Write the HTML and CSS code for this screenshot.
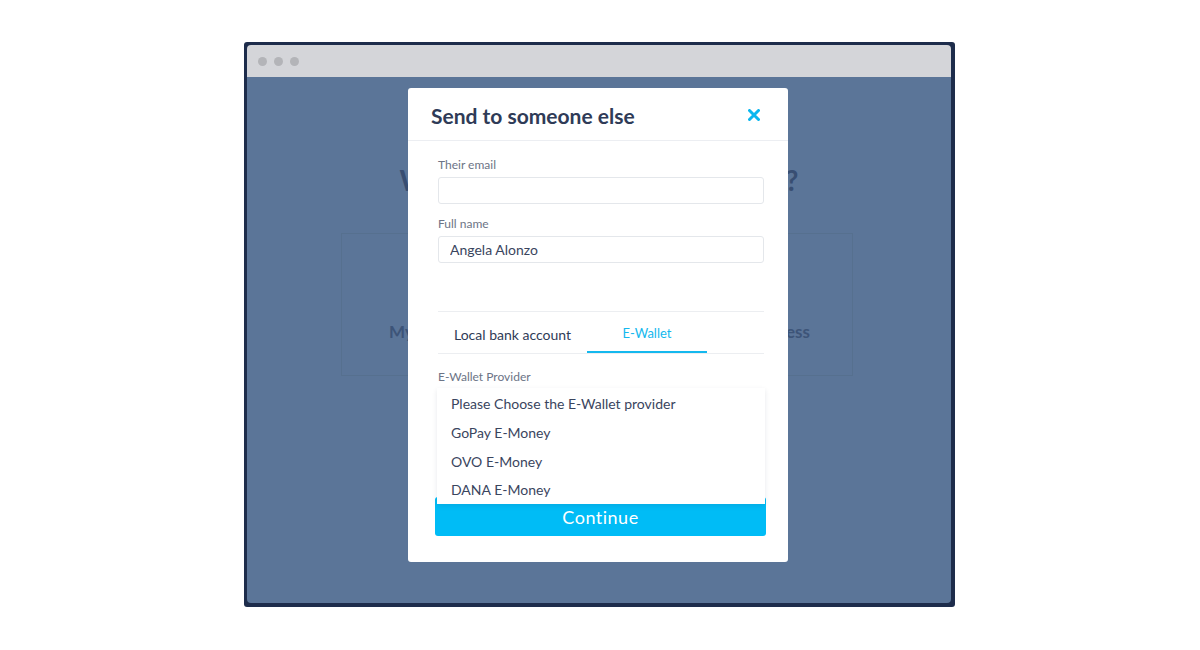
FILE: index.html
```html
<!DOCTYPE html>
<html lang="en">
<head>
    <meta charset="UTF-8">
    <meta name="viewport" content="width=device-width, initial-scale=1.0">
    <title>Send to someone else</title>
    <link rel="stylesheet" href="styles.css">
</head>
<body>
    <div class="frame">
        <div class="window">
            <div class="titlebar">
                <span class="dot"></span>
                <span class="dot"></span>
                <span class="dot"></span>
            </div>
            <div class="screen">
                <!-- page behind the modal -->
                <h1 class="page-title">Who are you sending money to?</h1>
                <div class="choice-card">
                    <div class="choice">
                        <span class="choice-text">Myself</span>
                    </div>
                    <div class="choice">
                        <span class="choice-text">A business</span>
                    </div>
                </div>

                <div class="modal">
                    <div class="modal-head">
                        <h2>Send to someone else</h2>
                        <svg class="close" width="12" height="12" viewBox="0 0 12 12">
                            <path d="M1.5 1.5 L10.5 10.5 M10.5 1.5 L1.5 10.5" stroke="#0bb7ef" stroke-width="3" stroke-linecap="round"/>
                        </svg>
                    </div>
                    <form class="modal-body" action="#">
                        <label class="field-label first" for="mail">Their email</label>
                        <input class="field" type="email" id="mail">

                        <label class="field-label" for="fname">Full name</label>
                        <input class="field" type="text" id="fname" value="Angela Alonzo">

                        <div class="tabs">
                            <div class="tab">Local bank account</div>
                            <div class="tab active">E-Wallet</div>
                        </div>

                        <label class="field-label provider">E-Wallet Provider</label>
                        <div class="select-wrap">
                            <div class="select"></div>
                            <ul class="options">
                                <li>Please Choose the E-Wallet provider</li>
                                <li>GoPay E-Money</li>
                                <li>OVO E-Money</li>
                                <li>DANA E-Money</li>
                            </ul>
                        </div>

                        <button type="button" class="continue">Continue</button>
                    </form>
                </div>
            </div>
        </div>
    </div>
</body>
</html>
```
FILE: styles.css
```css
body {
    margin: 0;
    background-color: #ffffff;
    font-family: Lato, "Open Sans", sans-serif;
}

.frame {
    display: flex;
    justify-content: center;
    padding-top: 42px;
    padding-right: 1px;
}

.window {
    width: 704px;
    background-color: #1d2c4b;
    padding: 3px 4px 4px 3px;
    border-radius: 3px;
}

.titlebar {
    height: 32px;
    background-color: #d4d5d9;
    border-radius: 4px 4px 0 0;
    display: flex;
    align-items: center;
    gap: 7px;
    padding-left: 11px;
}

.dot {
    width: 9px;
    height: 9px;
    border-radius: 50%;
    background-color: #b3b4b8;
}

.screen {
    position: relative;
    height: 526px;
    background-color: #5b7598;
    border-radius: 0 0 4px 4px;
    display: flex;
    flex-direction: column;
    align-items: center;
}

.page-title {
    margin: 86px 0 0 0;
    font-size: 28px;
    font-weight: 700;
    color: #384e72;
}

.choice-card {
    margin-top: 36px;
    margin-right: 4px;
    width: 512px;
    height: 143px;
    border: 1px solid #56708f;
    display: flex;
    justify-content: space-between;
    padding: 0 42px 0 47px;
    box-sizing: border-box;
}

.choice {
    display: flex;
    flex-direction: column;
    align-items: center;
    padding-top: 87px;
}

.choice-text {
    font-size: 17px;
    font-weight: 700;
    color: #3d5478;
}

.modal {
    position: absolute;
    top: 11px;
    left: 161px;
    width: 380px;
    height: 474px;
    background-color: #ffffff;
    border-radius: 3px;
}

.modal-head {
    height: 52px;
    border-bottom: 1px solid #eceef2;
    display: flex;
    align-items: center;
    justify-content: space-between;
    padding: 0 28px 0 23px;
}

.modal-head h2 {
    margin: 2px 0 0 0;
    font-size: 21px;
    font-weight: 700;
    color: #2f3b57;
}

.close {
    margin-top: 1px;
}

.modal-body {
    display: flex;
    flex-direction: column;
    padding: 0 24px 0 30px;
}

.field-label {
    font-size: 12px;
    color: #6c7486;
    margin-top: 13px;
    line-height: 14px;
}

.field-label.first {
    margin-top: 17px;
}

.field-label.provider {
    margin-top: 16px;
}

.field {
    margin-top: 5px;
    height: 27px;
    border: 1px solid #e4e7eb;
    border-radius: 3px;
    box-sizing: border-box;
    padding: 0 11px;
    font-family: Lato, "Open Sans", sans-serif;
    font-size: 14px;
    color: #3a455e;
    outline: none;
}

.tabs {
    margin-top: 48px;
    border-top: 1px solid #eceef1;
    border-bottom: 1px solid #eceef1;
    display: flex;
    height: 41px;
}

.tab {
    width: 149px;
    display: flex;
    align-items: center;
    justify-content: center;
    font-size: 14px;
    color: #2f3b57;
    padding-top: 4px;
    box-sizing: border-box;
}

.tab.active {
    width: 120px;
    color: #14b8ee;
    font-size: 13px;
    border-bottom: 2px solid #14b8ee;
    padding-top: 2px;
}

.select-wrap {
    position: relative;
    height: 109px;
    margin-top: 4px;
}

.select {
    height: 30px;
}

.options {
    position: absolute;
    top: 0;
    left: -1px;
    right: -1px;
    margin: 0;
    padding: 1px 0 0 0;
    list-style: none;
    background-color: #ffffff;
    box-shadow: 0 2px 5px rgba(30, 40, 70, 0.1);
    z-index: 2;
}

.options li {
    height: 29px;
    line-height: 29px;
    padding-left: 14px;
    font-size: 14px;
    color: #3a455e;
}

.options li:last-child {
    height: 28px;
    line-height: 28px;
}

.continue {
    margin: 0 -2px 0 -3px;
    height: 39px;
    padding-top: 1px;
    background-color: #00bcf6;
    border: none;
    border-radius: 3px;
    color: #ffffff;
    font-family: Lato, "Open Sans", sans-serif;
    font-size: 18px;
    letter-spacing: 0.5px;
}
```
